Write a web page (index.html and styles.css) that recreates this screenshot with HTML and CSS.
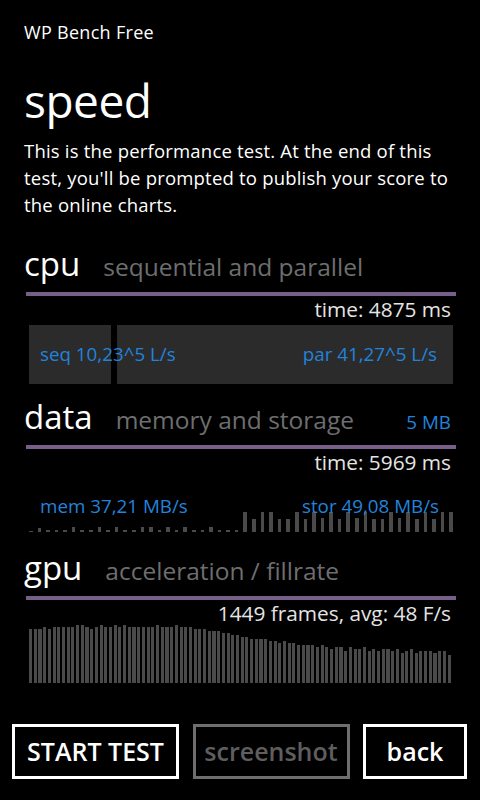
FILE: index.html
```html
<!DOCTYPE html>
<html lang="en">
<head>
<meta charset="utf-8">
<title>WP Bench Free</title>
<link rel="stylesheet" href="styles.css">
</head>
<body>
<div class="page">
  <div class="app-title">WP Bench Free</div>
  <h1 class="page-title">speed</h1>
  <p class="intro">This is the performance test. At the end of this test, you'll be prompted to publish your score to the online charts.</p>

  <section class="sec sec-cpu">
    <div class="sec-head">
      <span class="sec-name">cpu</span>
      <span class="sec-sub">sequential and parallel</span>
    </div>
    <div class="sec-result">time: 4875 ms</div>
    <div class="cpu-panel">
      <div class="cpu-bars">
        <div class="cpu-bar cpu-seq"></div>
        <div class="cpu-bar cpu-par"></div>
      </div>
      <div class="cpu-labels">
        <span class="val">seq 10,23^5 L/s</span>
        <span class="val">par 41,27^5 L/s</span>
      </div>
    </div>
  </section>

  <section class="sec sec-data">
    <div class="sec-head">
      <span class="sec-name">data</span>
      <span class="sec-sub">memory and storage</span>
      <span class="sec-extra val">5 MB</span>
    </div>
    <div class="sec-result">time: 5969 ms</div>
    <div class="data-chart">
      <div class="data-bars">
        <i class="dbar" style="height:1px"></i><i class="dbar" style="height:4px"></i><i class="dbar" style="height:2px"></i><i class="dbar" style="height:2px"></i><i class="dbar" style="height:2px"></i><i class="dbar" style="height:5px"></i><i class="dbar" style="height:2px"></i><i class="dbar" style="height:2px"></i><i class="dbar" style="height:5px"></i><i class="dbar" style="height:2px"></i><i class="dbar" style="height:5px"></i><i class="dbar" style="height:2px"></i><i class="dbar" style="height:2px"></i><i class="dbar" style="height:5px"></i><i class="dbar" style="height:5px"></i><i class="dbar" style="height:2px"></i><i class="dbar" style="height:5px"></i><i class="dbar" style="height:2px"></i><i class="dbar" style="height:5px"></i><i class="dbar" style="height:2px"></i><i class="dbar" style="height:2px"></i><i class="dbar" style="height:5px"></i><i class="dbar" style="height:2px"></i><i class="dbar" style="height:2px"></i><i class="dbar" style="height:2px"></i><i class="dbar" style="height:20px"></i><i class="dbar" style="height:13px"></i><i class="dbar" style="height:20px"></i><i class="dbar" style="height:20px"></i><i class="dbar" style="height:13px"></i><i class="dbar" style="height:13px"></i><i class="dbar" style="height:20px"></i><i class="dbar" style="height:13px"></i><i class="dbar" style="height:20px"></i><i class="dbar" style="height:14px"></i><i class="dbar" style="height:20px"></i><i class="dbar" style="height:13px"></i><i class="dbar" style="height:20px"></i><i class="dbar" style="height:14px"></i><i class="dbar" style="height:20px"></i><i class="dbar" style="height:13px"></i><i class="dbar" style="height:13px"></i><i class="dbar" style="height:20px"></i><i class="dbar" style="height:14px"></i><i class="dbar" style="height:20px"></i><i class="dbar" style="height:13px"></i><i class="dbar" style="height:20px"></i><i class="dbar" style="height:13px"></i><i class="dbar" style="height:20px"></i><i class="dbar" style="height:20px"></i>
      </div>
      <div class="data-labels">
        <span class="val">mem 37,21 MB/s</span>
        <span class="val">stor 49,08 MB/s</span>
      </div>
    </div>
  </section>

  <section class="sec sec-gpu">
    <div class="sec-head">
      <span class="sec-name">gpu</span>
      <span class="sec-sub">acceleration / fillrate</span>
    </div>
    <div class="sec-result">1449 frames, avg: 48 F/s</div>
    <div class="gpu-bars">
      <i class="gbar" style="height:54px"></i><i class="gbar" style="height:54px"></i><i class="gbar" style="height:54px"></i><i class="gbar" style="height:56px"></i><i class="gbar" style="height:54px"></i><i class="gbar" style="height:56px"></i><i class="gbar" style="height:56px"></i><i class="gbar" style="height:56px"></i><i class="gbar" style="height:56px"></i><i class="gbar" style="height:56px"></i><i class="gbar" style="height:58px"></i><i class="gbar" style="height:58px"></i><i class="gbar" style="height:56px"></i><i class="gbar" style="height:54px"></i><i class="gbar" style="height:56px"></i><i class="gbar" style="height:58px"></i><i class="gbar" style="height:56px"></i><i class="gbar" style="height:56px"></i><i class="gbar" style="height:58px"></i><i class="gbar" style="height:56px"></i><i class="gbar" style="height:58px"></i><i class="gbar" style="height:56px"></i><i class="gbar" style="height:56px"></i><i class="gbar" style="height:56px"></i><i class="gbar" style="height:56px"></i><i class="gbar" style="height:56px"></i><i class="gbar" style="height:56px"></i><i class="gbar" style="height:58px"></i><i class="gbar" style="height:56px"></i><i class="gbar" style="height:56px"></i><i class="gbar" style="height:56px"></i><i class="gbar" style="height:58px"></i><i class="gbar" style="height:56px"></i><i class="gbar" style="height:56px"></i><i class="gbar" style="height:56px"></i><i class="gbar" style="height:54px"></i><i class="gbar" style="height:54px"></i><i class="gbar" style="height:54px"></i><i class="gbar" style="height:52px"></i><i class="gbar" style="height:52px"></i><i class="gbar" style="height:52px"></i><i class="gbar" style="height:50px"></i><i class="gbar" style="height:50px"></i><i class="gbar" style="height:48px"></i><i class="gbar" style="height:48px"></i><i class="gbar" style="height:46px"></i><i class="gbar" style="height:46px"></i><i class="gbar" style="height:44px"></i><i class="gbar" style="height:44px"></i><i class="gbar" style="height:44px"></i><i class="gbar" style="height:44px"></i><i class="gbar" style="height:42px"></i><i class="gbar" style="height:42px"></i><i class="gbar" style="height:40px"></i><i class="gbar" style="height:42px"></i><i class="gbar" style="height:40px"></i><i class="gbar" style="height:40px"></i><i class="gbar" style="height:38px"></i><i class="gbar" style="height:38px"></i><i class="gbar" style="height:38px"></i><i class="gbar" style="height:38px"></i><i class="gbar" style="height:36px"></i><i class="gbar" style="height:38px"></i><i class="gbar" style="height:36px"></i><i class="gbar" style="height:34px"></i><i class="gbar" style="height:36px"></i><i class="gbar" style="height:36px"></i><i class="gbar" style="height:32px"></i><i class="gbar" style="height:36px"></i><i class="gbar" style="height:34px"></i><i class="gbar" style="height:34px"></i><i class="gbar" style="height:36px"></i><i class="gbar" style="height:32px"></i><i class="gbar" style="height:34px"></i><i class="gbar" style="height:32px"></i><i class="gbar" style="height:34px"></i><i class="gbar" style="height:34px"></i><i class="gbar" style="height:32px"></i><i class="gbar" style="height:34px"></i><i class="gbar" style="height:30px"></i><i class="gbar" style="height:32px"></i><i class="gbar" style="height:34px"></i><i class="gbar" style="height:30px"></i><i class="gbar" style="height:32px"></i><i class="gbar" style="height:32px"></i><i class="gbar" style="height:32px"></i><i class="gbar" style="height:30px"></i><i class="gbar" style="height:32px"></i><i class="gbar" style="height:32px"></i><i class="gbar" style="height:28px"></i>
    </div>
  </section>

  <div class="actions">
    <button class="btn">START TEST</button>
    <button class="btn btn-disabled">screenshot</button>
    <button class="btn">back</button>
  </div>
</div>
</body>
</html>
```

FILE: styles.css
```css
* { box-sizing: border-box; }

html, body {
  margin: 0;
  padding: 0;
  background: #000;
}

body {
  width: 480px;
  height: 800px;
  overflow: hidden;
  color: #fff;
  font-family: "Open Sans", "Noto Sans", sans-serif;
}

.page {
  display: flex;
  flex-direction: column;
}

.app-title {
  padding: 20px 0 0 24px;
  font-size: 18px;
  line-height: 24px;
  letter-spacing: 0.3px;
}

.page-title {
  margin: 31px 0 0 24px;
  font-size: 46px;
  font-weight: 400;
  line-height: 50px;
  letter-spacing: -0.5px;
}

.intro {
  margin: 12px 18px 0 24px;
  font-size: 18.5px;
  line-height: 27px;
  letter-spacing: 0.2px;
}

.sec {
  margin: 0 24px 0 26px;
}

.sec-cpu { margin-top: 28px; }
.sec-data { margin-top: 15px; }
.sec-gpu { margin-top: 18px; }

.sec-head {
  display: flex;
  align-items: baseline;
  padding: 0 5px 10px 0;
  border-bottom: 4px solid #76608a;
  line-height: 36px;
  white-space: nowrap;
}

.sec-name {
  margin-left: -2px;
  font-size: 33px;
}

.sec-sub {
  margin-left: 23px;
  font-size: 24.5px;
  line-height: 24px;
  color: #6e6e6e;
}

.sec-extra {
  margin-left: auto;
}

.sec-result {
  margin-top: 1px;
  padding-right: 5px;
  text-align: right;
  font-size: 20.8px;
  line-height: 24px;
  color: #e4e4e4;
}

.val {
  color: #2283dc;
  font-size: 18.8px;
  line-height: 24px;
}

/* cpu */
.cpu-panel {
  display: grid;
  margin: 4px 3px 0 3px;
  height: 59px;
}

.cpu-bars,
.cpu-labels {
  grid-area: 1 / 1;
}

.cpu-bars {
  display: flex;
  gap: 6px;
}

.cpu-bar { background: #2b2b2b; }
.cpu-seq { width: 82px; }
.cpu-par { flex: 1; }

.cpu-labels {
  display: flex;
  justify-content: space-between;
  align-items: center;
  padding: 0 16px 2px 11px;
}

/* data */
.data-chart {
  display: grid;
  margin: 17px 3px 0 3px;
  height: 41px;
}

.data-bars,
.data-labels {
  grid-area: 1 / 1;
}

.data-bars {
  display: flex;
  align-items: flex-end;
  gap: 5px;
}

.dbar {
  flex: 1;
  background: #4a4a4a;
}

.data-labels {
  display: flex;
  justify-content: space-between;
  align-items: flex-start;
  padding: 3px 14px 0 11px;
}

/* gpu */
.gpu-bars {
  display: flex;
  align-items: flex-end;
  gap: 1.6px;
  height: 59px;
  margin: -1px 5px 0 3px;
}

.gbar {
  flex: 1;
  background: #4a4a4a;
}

/* buttons */
.actions {
  display: grid;
  grid-template-columns: 167px 157px 104px;
  justify-content: space-between;
  padding: 0 13px 0 12px;
  margin-top: 41px;
}

.btn {
  height: 55px;
  border: 3px solid #fff;
  background: #000;
  color: #fff;
  font-family: "Open Sans", "Noto Sans", sans-serif;
  font-size: 25px;
  font-weight: 600;
  line-height: 49px;
  padding: 0;
}

.btn-disabled {
  border-color: #6e6e6e;
  color: #5e5e5e;
}
```
